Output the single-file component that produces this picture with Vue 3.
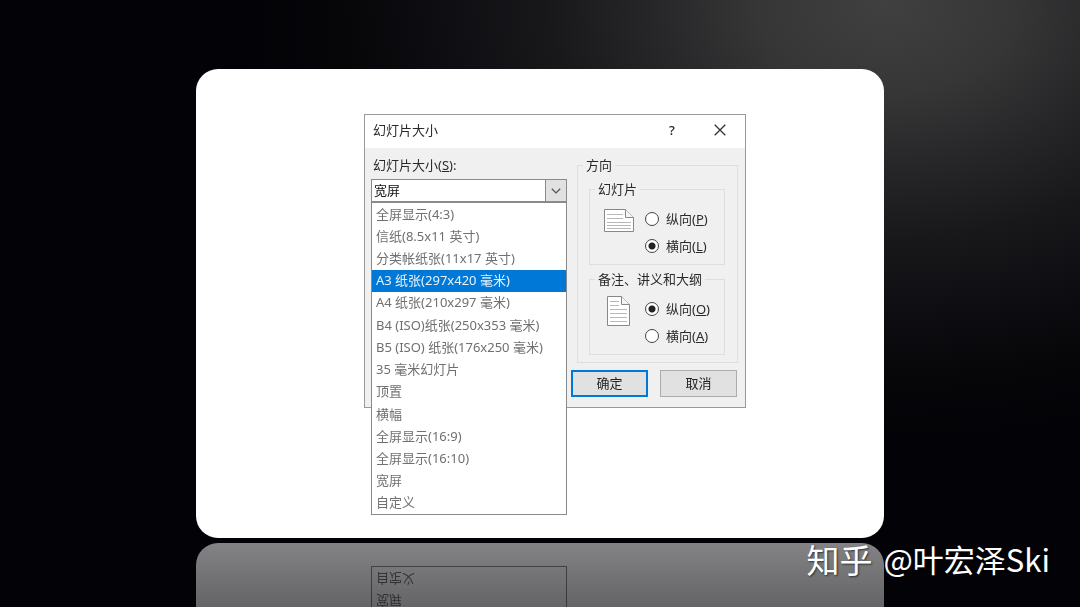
<script setup>
import { ref } from 'vue'

const sizes = [
  '全屏显示(4:3)',
  '信纸(8.5x11 英寸)',
  '分类帐纸张(11x17 英寸)',
  'A3 纸张(297x420 毫米)',
  'A4 纸张(210x297 毫米)',
  'B4 (ISO)纸张(250x353 毫米)',
  'B5 (ISO) 纸张(176x250 毫米)',
  '35 毫米幻灯片',
  '顶置',
  '横幅',
  '全屏显示(16:9)',
  '全屏显示(16:10)',
  '宽屏',
  '自定义',
]
const selected = ref('宽屏')
const highlighted = ref(3)
const slideOrientation = ref('landscape')
const notesOrientation = ref('portrait')
</script>

<template>
  <main class="stage">
    <section class="card">
      <div class="dialog" role="dialog" aria-labelledby="dialog-title">
        <header class="titlebar">
          <h1 id="dialog-title" class="title">幻灯片大小</h1>
          <button class="tool" type="button">?</button>
          <button class="tool" type="button" aria-label="关闭">
            <svg width="12" height="12" viewBox="0 0 12 12" fill="none" stroke="#333" stroke-width="1.3">
              <path d="M0.7 0.7 11.3 11.3M11.3 0.7 0.7 11.3" />
            </svg>
          </button>
        </header>

        <div class="body">
          <div class="size">
            <label class="size-label" for="slide-size">幻灯片大小(<u>S</u>):</label>
            <div class="combo">
              <select id="slide-size" v-model="selected" class="select">
                <option v-for="s in sizes" :key="s">{{ s }}</option>
              </select>
              <span class="arrow">
                <svg width="10" height="6" viewBox="0 0 10 6" fill="none" stroke="#555" stroke-width="1.3">
                  <path d="M0.8 0.7 5 4.9 9.2 0.7" />
                </svg>
              </span>
              <ul class="list" role="listbox" aria-label="幻灯片大小">
                <li
                  v-for="(s, i) in sizes"
                  :key="s"
                  class="item"
                  :class="{ active: i === highlighted }"
                  role="option"
                  :aria-selected="i === highlighted"
                  @mouseenter="highlighted = i"
                  @click="selected = s"
                >
                  {{ s }}
                </li>
              </ul>
            </div>
          </div>

          <div class="side">
            <fieldset class="group outer">
              <legend>方向</legend>
              <fieldset class="group inner">
                <legend>幻灯片</legend>
                <div class="choice">
                  <svg class="page" width="32" height="32" viewBox="0 0 32 32">
                    <path d="M1.5 4.5H22.5L30.5 12.5V26.5H1.5Z" fill="#fff" stroke="#888" />
                    <path d="M22.5 4.5V12.5H30.5" fill="#f4f4f4" stroke="#888" />
                    <path d="M4 9.5H20M4 13.5H20M4 17.5H28M4 20.5H28M4 23.5H28" stroke="#b8b8b8" />
                  </svg>
                  <div class="radios">
                    <label><input v-model="slideOrientation" type="radio" name="slide" value="portrait" /><span>纵向(<u>P</u>)</span></label>
                    <label><input v-model="slideOrientation" type="radio" name="slide" value="landscape" /><span>横向(<u>L</u>)</span></label>
                  </div>
                </div>
              </fieldset>
              <fieldset class="group inner">
                <legend>备注、讲义和大纲</legend>
                <div class="choice">
                  <svg class="page" width="32" height="32" viewBox="0 0 32 32">
                    <path d="M4.5 1.5H18.5L26.5 9.5V30.5H4.5Z" fill="#fff" stroke="#888" />
                    <path d="M18.5 1.5V9.5H26.5" fill="#f4f4f4" stroke="#888" />
                    <path d="M7 6.5H16M7 10.5H16M7 14.5H24M7 18.5H24M7 22.5H24M7 26.5H24" stroke="#b8b8b8" />
                  </svg>
                  <div class="radios">
                    <label><input v-model="notesOrientation" type="radio" name="notes" value="portrait" /><span>纵向(<u>O</u>)</span></label>
                    <label><input v-model="notesOrientation" type="radio" name="notes" value="landscape" /><span>横向(<u>A</u>)</span></label>
                  </div>
                </div>
              </fieldset>
            </fieldset>
            <div class="actions">
              <button class="btn primary" type="button">确定</button>
              <button class="btn" type="button">取消</button>
            </div>
          </div>
        </div>
      </div>
    </section>

    <p class="credit"><span class="site">知乎</span><span>@叶宏泽Ski</span></p>
  </main>
</template>

<style>
body {
  background: #030306;
}
</style>

<style scoped>
.stage {
  position: relative;
  box-sizing: border-box;
  height: 100vh;
  padding: 69px 196px 0;
  overflow: hidden;
  background:
    radial-gradient(ellipse 640px 440px at 82% 1%, #404041 0%, #363637 20%, #262628 37%, #18181b 53%, #0e0e12 70%, #060609 85%, rgba(3, 3, 7, 0) 100%),
    #030307;
  font-family: "Noto Sans", "Noto Sans CJK SC", sans-serif;
  font-size: 13px;
  line-height: 18px;
  color: #2a2a2a;
}

.card {
  padding: 45px 138px 130px 168px;
  border-radius: 22px;
  background: #fff;
  -webkit-box-reflect: below 5px linear-gradient(transparent 42%, rgba(255, 255, 255, 0.51));
}

.dialog {
  border: 1px solid #999;
  background: #f0f0f0;
}

.titlebar {
  display: flex;
  align-items: center;
  box-sizing: border-box;
  height: 33px;
  padding: 0 1px 3px 8px;
  background: #fff;
}

.title {
  flex: 1;
  margin: 0;
  font-size: 13px;
  font-weight: 400;
}

.tool {
  display: flex;
  align-items: center;
  justify-content: center;
  width: 48px;
  height: 30px;
  padding: 0;
  border: 0;
  background: none;
  color: #222;
  font: inherit;
  font-weight: 500;
}

.body {
  display: grid;
  grid-template-columns: minmax(0, 1fr) 167px;
  gap: 4px;
  padding: 8px 7px 10px 6px;
}

.size-label {
  display: block;
  margin: 0 0 5px 2px;
}

.combo {
  position: relative;
}

.select {
  display: block;
  box-sizing: border-box;
  width: 100%;
  height: 23px;
  padding: 0 24px 2px 2px;
  border: 1px solid #8a8a8a;
  border-radius: 0;
  appearance: none;
  background: #fff;
  color: #111;
  font: inherit;
}

.arrow {
  position: absolute;
  top: 0;
  right: 0;
  display: flex;
  align-items: center;
  justify-content: center;
  box-sizing: border-box;
  width: 22px;
  height: 23px;
  border: 1px solid #8a8a8a;
  background: #e1e1e1;
  pointer-events: none;
}

.list {
  position: absolute;
  top: 100%;
  left: 0;
  right: 0;
  z-index: 2;
  display: grid;
  grid-auto-rows: 1fr;
  box-sizing: border-box;
  height: 313px;
  margin: 0;
  padding: 0;
  border: 1px solid #8a8a8a;
  background: #fff;
  color: #707070;
  list-style: none;
}

.item {
  display: flex;
  align-items: center;
  padding: 0 0 1px 4px;
  white-space: nowrap;
}

.item.active {
  background: #0078d7;
  color: #e6f2fc;
}

.group {
  min-width: 0;
  margin: 0;
  border: 1px solid #dedede;
}

.outer {
  margin-left: 6px;
  padding: 6px 12px 7px 11px;
}

.inner {
  padding: 7px 0 5px 13px;
}

.inner + .inner {
  margin-top: 5px;
}

legend {
  height: 18px;
  padding: 0 3px;
  white-space: nowrap;
}

.outer > legend {
  margin-left: -6px;
}

.inner > legend {
  margin-left: -8px;
}

.choice {
  display: flex;
  gap: 10px;
}

.page {
  flex: none;
}

.radios label {
  display: flex;
  align-items: center;
  gap: 7px;
  height: 27px;
  white-space: nowrap;
}

.radios input {
  box-sizing: border-box;
  width: 14px;
  height: 14px;
  margin: 0;
  border: 1px solid #444;
  border-radius: 50%;
  appearance: none;
  background: #fff;
}

.radios input:checked {
  background: radial-gradient(circle, #222 3px, #fff 4px);
}

.actions {
  display: grid;
  grid-template-columns: 1fr 1fr;
  gap: 12px;
  margin: 7px 1px 0 0;
}

.btn {
  box-sizing: border-box;
  height: 27px;
  padding: 0 0 2px;
  border: 1px solid #adadad;
  background: #e1e1e1;
  color: #222;
  font: inherit;
}

.btn.primary {
  border: 2px solid #0078d7;
}

.credit {
  position: absolute;
  right: 30px;
  bottom: 28px;
  display: flex;
  align-items: center;
  gap: 11px;
  margin: 0;
  font-family: "Noto Sans CJK SC", sans-serif;
  font-size: 31px;
  line-height: 40px;
  color: #fff;
  text-shadow: 1px 1px 2px rgba(0, 0, 0, 0.6);
}

.site {
  font-size: 33px;
}
</style>
